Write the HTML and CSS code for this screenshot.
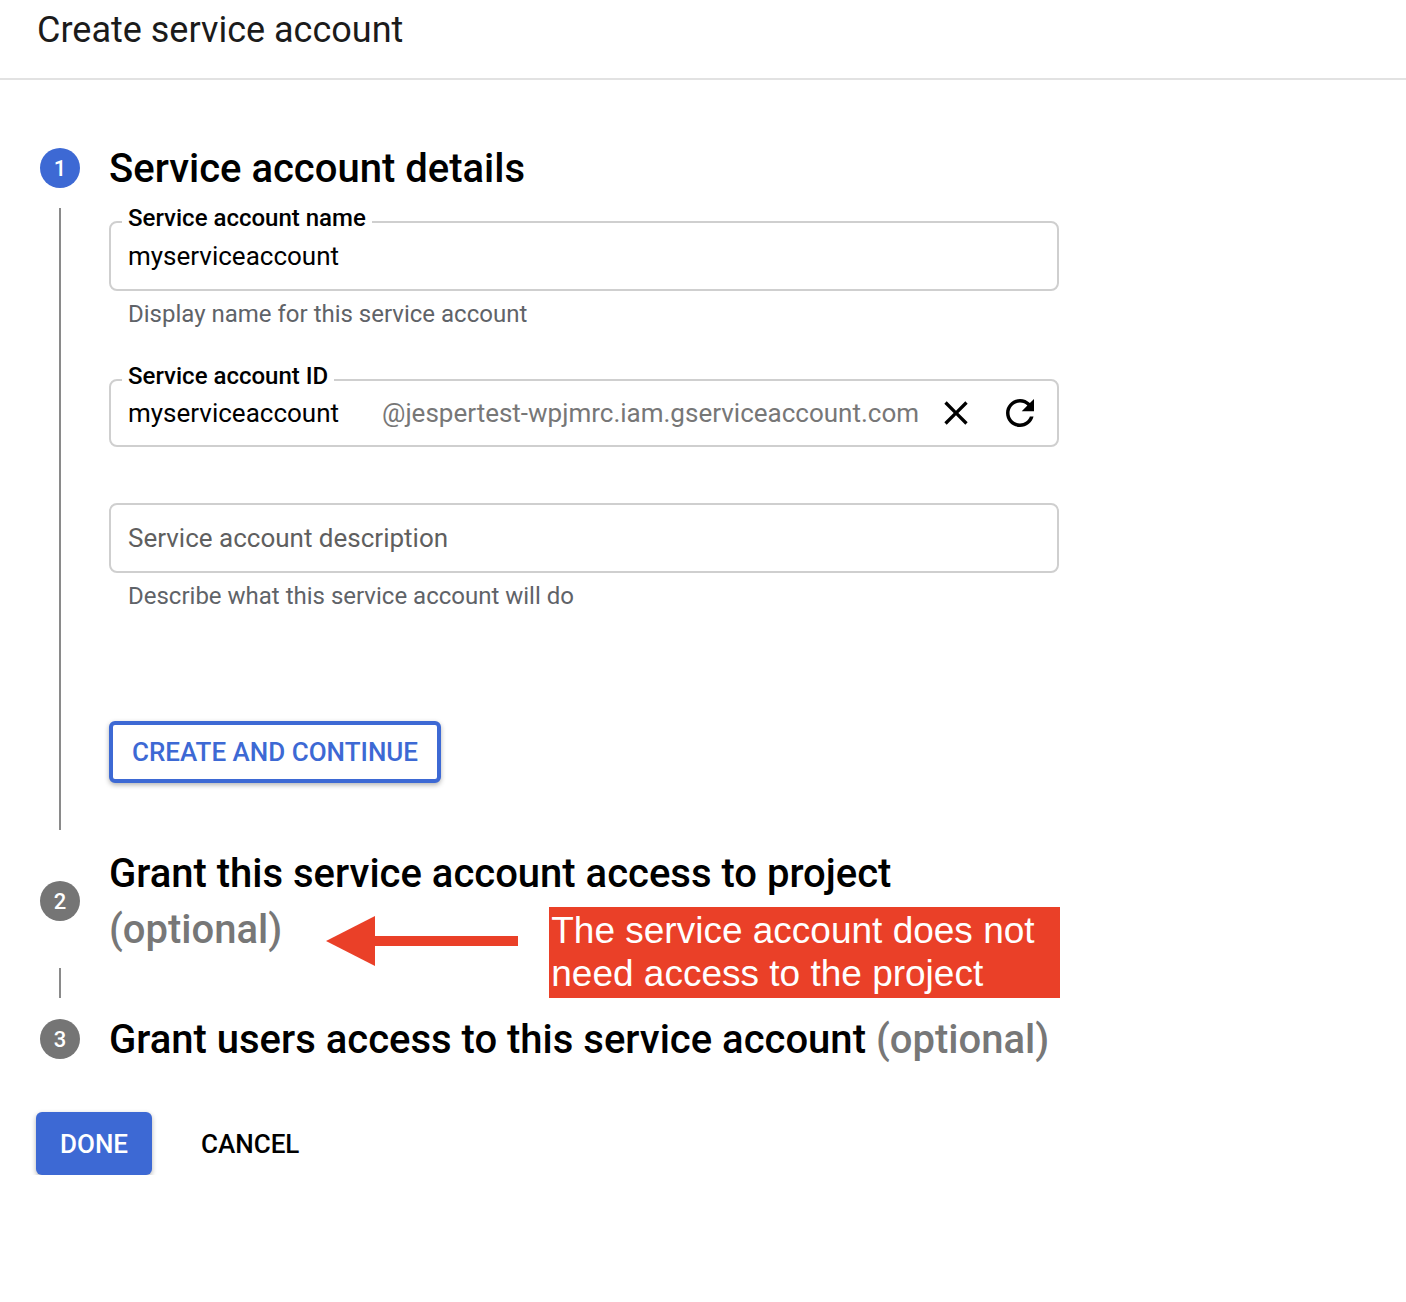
FILE: index.html
```html
<!DOCTYPE html>
<html lang="en">
<head>
<meta charset="utf-8">
<title>Create service account</title>
<link rel="stylesheet" href="styles.css">
</head>
<body>
<header class="topbar">
  <h1 class="title">Create service account</h1>
</header>
<main class="wizard">
  <section class="step step-1">
    <div class="step-head">
      <span class="badge badge-active">1</span>
      <h2 class="step-title">Service account details</h2>
    </div>
    <div class="step-body">
      <div class="rail"><span class="rail-line"></span></div>
      <div class="step-content">
        <div class="field">
          <span class="field-label">Service account name</span>
          <span class="field-value">myserviceaccount</span>
        </div>
        <div class="hint">Display name for this service account</div>

        <div class="field field-id group-id">
          <span class="field-label">Service account ID</span>
          <span class="field-value">myserviceaccount</span>
          <span class="suffix">@jespertest-wpjmrc.iam.gserviceaccount.com</span>
          <span class="field-actions">
            <svg class="icon-close" viewBox="0 0 24 24" width="40" height="40"><path d="M19 6.41L17.59 5 12 10.59 6.41 5 5 6.41 10.59 12 5 17.59 6.41 19 12 13.41 17.59 19 19 17.59 13.41 12z"/></svg>
            <svg class="icon-refresh" viewBox="0 0 24 24" width="42" height="42"><path d="M17.65 6.35C16.2 4.9 14.21 4 12 4c-4.42 0-7.99 3.58-7.99 8s3.57 8 7.99 8c3.73 0 6.84-2.55 7.73-6h-2.08c-.82 2.33-3.04 4-5.65 4-3.31 0-6-2.69-6-6s2.69-6 6-6c1.66 0 3.14.69 4.22 1.78L13 11h7V4l-2.35 2.35z"/></svg>
          </span>
        </div>

        <div class="field group-desc">
          <span class="placeholder">Service account description</span>
        </div>
        <div class="hint">Describe what this service account will do</div>

        <button class="btn-outline" type="button">CREATE AND CONTINUE</button>
      </div>
    </div>
  </section>

  <section class="step step-2">
    <div class="step-head">
      <span class="badge">2</span>
      <div class="step-title step-title-tall">
        <div class="title-line">Grant this service account access to project</div>
        <div class="title-line title-row">
          <span class="optional">(optional)</span>
          <svg class="arrow" viewBox="0 0 192 50" width="192" height="50"><polygon points="0,25 49,0 49,50"/><rect x="48" y="20" width="144" height="10"/></svg>
          <div class="callout">The service account does not need access to the project</div>
        </div>
      </div>
    </div>
    <div class="step-body step-body-short">
      <div class="rail"><span class="rail-line"></span></div>
    </div>
  </section>

  <section class="step step-3">
    <div class="step-head">
      <span class="badge">3</span>
      <h2 class="step-title">Grant users access to this service account <span class="optional">(optional)</span></h2>
    </div>
  </section>

  <div class="actions">
    <button class="btn-primary" type="button">DONE</button>
    <button class="btn-text" type="button">CANCEL</button>
  </div>
</main>
</body>
</html>
```
FILE: styles.css
```css
* { box-sizing: border-box; }

body {
  margin: 0;
  background: #fff;
  color: #202124;
  font-family: Roboto, "Noto Sans", Arial, sans-serif;
}

.topbar {
  height: 80px;
  padding: 8px 0 0 37px;
  border-bottom: 2px solid #e2e2e2;
}

.title {
  margin: 0;
  font-size: 36px;
  font-weight: 400;
  line-height: 44px;
  color: #1b1b1b;
}

.wizard {
  padding: 63px 0 0 40px;
}

.step-head {
  display: flex;
  align-items: center;
  gap: 29px;
}

.badge {
  flex: none;
  width: 40px;
  height: 40px;
  border-radius: 50%;
  background: #757575;
  color: #fff;
  font-size: 22px;
  font-weight: 500;
  display: flex;
  align-items: center;
  justify-content: center;
}

.badge-active { background: #3d69d4; }

.step-title {
  margin: 0;
  padding-top: 2px;
  font-size: 40px;
  font-weight: 500;
  line-height: 48px;
  color: #000;
}

.step-title-tall { line-height: 56px; }

.title-row {
  display: flex;
  align-items: flex-start;
  height: 56px;
}

.optional { color: #777; }

.arrow {
  flex: none;
  margin: 14px 0 0 44px;
  fill: #ea4028;
}

.callout {
  flex: none;
  width: 511px;
  height: 91px;
  margin: 5px 0 0 31px;
  padding: 2px;
  background: #ea4028;
  color: #fff;
  font-family: "Liberation Sans", Arial, sans-serif;
  font-weight: 400;
  font-size: 37px;
  line-height: 43px;
}

.step-body {
  display: flex;
  margin-top: 15px;
}

.rail {
  flex: none;
  width: 40px;
  display: flex;
  justify-content: center;
}

.rail-line {
  width: 2px;
  background: #8a8a8a;
}

.step-content {
  width: 950px;
  margin-left: 29px;
  padding: 13px 0 47px;
}

.field {
  position: relative;
  height: 70px;
  display: flex;
  align-items: center;
  padding: 0 16px 0 17px;
  border: 2px solid #cfcfcf;
  border-radius: 8px;
  font-size: 26px;
}

.field-label {
  position: absolute;
  left: 11px;
  top: -19px;
  padding: 0 6px;
  background: #fff;
  color: #000;
  font-size: 24px;
  font-weight: 500;
  line-height: 28px;
}

.field-value { color: #000; }

.field-id { height: 68px; }

.suffix {
  margin-left: 43px;
  color: #777;
}

.field-actions {
  margin-left: auto;
  display: flex;
  align-items: center;
  gap: 23px;
}

.field-actions svg { fill: #000; }

.placeholder { color: #5f5f5f; }

.hint {
  margin-top: 9px;
  padding-left: 19px;
  font-size: 24px;
  line-height: 28px;
  color: #5f6368;
}

.group-id { margin-top: 51px; }
.group-desc { margin-top: 56px; }

.btn-outline {
  display: block;
  margin-top: 111px;
  width: 332px;
  height: 62px;
  padding: 0 18px;
  border: 4px solid #3d69d4;
  border-radius: 6px;
  background: #fff;
  color: #3d69d4;
  font-family: Roboto, "Noto Sans", Arial, sans-serif;
  font-size: 26px;
  font-weight: 500;
  box-shadow: 0 2px 5px rgba(0, 0, 0, 0.3);
}

.step-2 { margin-top: 14px; }

.step-body-short {
  margin-top: 10px;
  height: 30px;
}

.step-3 { margin-top: 16px; }

.actions {
  display: flex;
  align-items: center;
  margin: 48px 0 0 -4px;
}

.btn-primary,
.btn-text {
  height: 63px;
  padding: 0 24px;
  border: 0;
  border-radius: 6px;
  font-family: Roboto, "Noto Sans", Arial, sans-serif;
  font-size: 26px;
  font-weight: 500;
}

.btn-primary {
  background: #3d69d4;
  color: #fff;
  box-shadow: 0 2px 5px rgba(0, 0, 0, 0.3);
}

.btn-text {
  margin-left: 25px;
  background: transparent;
  color: #000;
}
```
